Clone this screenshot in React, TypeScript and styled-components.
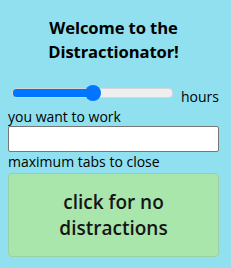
import React, { useState } from 'react'
import styled, { createGlobalStyle } from 'styled-components'

const GlobalStyle = createGlobalStyle`
  html, body {
    margin: 0;
    background: #90e0ef;
  }
  body {
    padding: 8px;
    font-family: "Open Sans", "Noto Sans", sans-serif;
    color: #000;
  }
`

const Popup = styled.div`
  width: 211px;
  display: flex;
  flex-direction: column;
`

const Title = styled.h2`
  margin: 8px 0 20px;
  font-size: 16.6px;
  line-height: 24px;
  font-weight: 700;
  text-align: center;
  letter-spacing: -0.1px;
`

const SliderRow = styled.div`
  display: flex;
  align-items: flex-start;
  gap: 8px;
  height: 24px;
`

const Slider = styled.input`
  -webkit-appearance: none;
  appearance: none;
  width: 160px;
  height: 8px;
  margin: 4px 0 0 4px;
  border-radius: 4px;
  background: linear-gradient(to right, #0075ff 0 50%, #efefef 50% 100%);
  border: 1px solid #d6d6d6;
  outline: none;

  &::-webkit-slider-thumb {
    -webkit-appearance: none;
    width: 16px;
    height: 16px;
    border-radius: 50%;
    background: #0075ff;
    border: none;
  }
`

const HoursLabel = styled.span`
  font-size: 14px;
  line-height: 18px;
  margin-top: 4px;
`

const Label = styled.div`
  font-size: 14px;
  line-height: 18px;
`

const TextBox = styled.input`
  box-sizing: border-box;
  width: 100%;
  height: 26px;
  margin: 0 0 1px;
  border: 1px solid #767676;
  border-radius: 2px;
  background: #fff;
`

const GoButton = styled.button`
  box-sizing: border-box;
  width: 100%;
  height: 84px;
  margin-top: 2px;
  background: #a8e6ac;
  border: 1px solid #9ccfa4;
  border-radius: 4px;
  font-family: inherit;
  font-size: 19px;
  font-weight: 600;
  line-height: 26px;
  color: #151515;
  padding: 0 20px;
`

export default function App() {
  const [hours, setHours] = useState(50)
  return (
    <>
      <GlobalStyle />
      <Popup>
        <Title>
          Welcome to the
          <br />
          Distractionator!
        </Title>
        <SliderRow>
          <Slider
            type="range"
            min={0}
            max={100}
            value={hours}
            onChange={(e) => setHours(Number(e.target.value))}
          />
          <HoursLabel>hours</HoursLabel>
        </SliderRow>
        <Label>you want to work</Label>
        <TextBox type="text" />
        <Label>maximum tabs to close</Label>
        <GoButton>click for no distractions</GoButton>
      </Popup>
    </>
  )
}
